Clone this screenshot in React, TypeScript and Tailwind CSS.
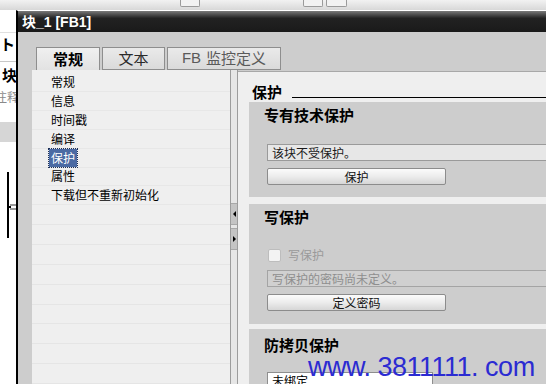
import React, { FC } from "react";

const cjk = "font-['Noto_Sans_CJK_SC','Liberation_Sans',sans-serif]";

const navItems = ["常规", "信息", "时间戳", "编译", "保护", "属性", "下载但不重新初始化"];

const Button: FC<{ label: string }> = ({ label }) => (
  <div className="ml-[3px] flex h-[17px] w-[179px] items-center justify-center rounded-[2px] border border-[#8c8c8c] bg-gradient-to-b from-[#fbfbfb] via-[#ececec] to-[#d6d6d6] text-[12px] leading-none text-[#111]">
    {label}
  </div>
);

const TextBox: FC<{ text: string; disabled?: boolean }> = ({ text, disabled }) => (
  <div
    className={`ml-[3px] flex h-[17px] items-center border pl-[4px] text-[12px] leading-none ${
      disabled
        ? "border-[#a4a4a4] bg-[#d0d0d0] text-[#8e8e8e]"
        : "border-[#9a9a9a] bg-[#e7e7e7] text-[#1a1a1a]"
    }`}
  >
    {text}
  </div>
);

const SectionTitle: FC<{ title: string; className: string }> = ({ title, className }) => (
  <div className={`text-[15px] font-bold text-black ${className}`}>{title}</div>
);

const App: FC = () => {
  const _renderBackdrop = () => {
    return (
      <div className="flex w-[16px] shrink-0 flex-col overflow-hidden bg-white">
        <div className="h-[23px] border-b border-[#e0e0e0]" />
        <div className="h-[29px] border-b border-[#c8c8c8] pt-[1px] text-[15px] font-bold leading-[20px] text-black">
          ト
        </div>
        <div className="h-[25px] pl-[2px] pt-[4px] text-[15px] font-bold leading-[18px] text-black">
          块
        </div>
        <div className="-ml-[5px] h-[35px] whitespace-nowrap pt-[2px] text-[12px] leading-[16px] text-[#8a8a8a]">
          注释
        </div>
        <div className="h-[20px] bg-[#d6d6d6]" />
        <div className="relative mt-[30px] h-[66px]">
          <div className="ml-[7px] h-[66px] w-[2px] bg-black" />
          <div className="absolute left-[10px] top-[32px] h-[2px] w-[6px] bg-[#9a9a9a]" />
          <div className="absolute left-[10px] top-[36px] h-[2px] w-[6px] bg-[#9a9a9a]" />
          <div className="absolute left-[7px] top-[34px] h-[2px] w-[4px] bg-black" />
        </div>
      </div>
    );
  };

  const _renderTabs = () => {
    return (
      <div className="ml-[4px] mt-[15px] flex h-[23px] items-stretch gap-[2px]">
        <div className="flex w-[64px] items-center justify-center border border-b-0 border-[#8e8e8e] bg-gradient-to-b from-[#f0f0f0] to-[#e2e2e2] text-[15px] font-bold text-black">
          常规
        </div>
        <div className="flex w-[63px] items-center justify-center border border-[#8e8e8e] bg-gradient-to-b from-[#eaeaea] to-[#dadada] text-[15px] text-[#2a2a2a]">
          文本
        </div>
        <div className="flex w-[114px] items-center justify-center border border-[#8e8e8e] bg-gradient-to-b from-[#eaeaea] to-[#dadada] text-[15px] text-[#5a5a5a]">
          <span className="font-['Liberation_Sans',sans-serif]">FB</span>
          <span className="ml-[5px]">监控定义</span>
        </div>
      </div>
    );
  };

  const _renderNav = () => {
    return (
      <div className="flex w-[198px] shrink-0 flex-col bg-[#efefef] pt-[3px]">
        {navItems.map((item) => (
          <div key={item} className="flex h-[19px] items-center border-b border-[#e7e7e7] pl-[17px]">
            {item === "保护" ? (
              <span className="flex h-[18px] items-center bg-[#4b6aa3] px-[2px] text-[12px] leading-none text-white outline-1 outline-dotted outline-[#1d2f55]">
                {item}
              </span>
            ) : (
              <span className="px-[2px] text-[12px] leading-none text-black">{item}</span>
            )}
          </div>
        ))}
        {Array.from({ length: 9 }).map((_, i) => (
          <div key={i} className="h-[20px] border-b border-[#e5e5e5]" />
        ))}
      </div>
    );
  };

  const _renderSplitter = () => {
    return (
      <div className="flex w-[8px] shrink-0 flex-col border-l border-r border-[#9c9c9c] bg-[#e6e6e6] pt-[133px]">
        <div className="flex h-[22px] items-center justify-center border-y border-[#a8a8a8] bg-[#c4c4c4]">
          <div className="h-0 w-0 border-y-[3px] border-r-[3px] border-y-transparent border-r-black" />
        </div>
        <div className="mt-[3px] flex h-[22px] items-center justify-center border-y border-[#a8a8a8] bg-[#c4c4c4]">
          <div className="h-0 w-0 border-y-[3px] border-l-[3px] border-y-transparent border-l-black" />
        </div>
      </div>
    );
  };

  const _renderDetail = () => {
    return (
      <div className="-mr-[30px] mt-[1px] flex min-w-0 flex-1 flex-col border-t border-[#a8a8a8] bg-[#efefef] pl-[11px]">
        <div className="flex h-[36px] items-start pl-[3px] pt-[10px]">
          <span className="text-[15px] font-bold leading-[20px] text-black">保护</span>
          <div className="ml-[10px] mt-[15px] h-px flex-1 bg-black" />
        </div>

        <div className="flex flex-col bg-[#cdcdcd] pb-[12px] pl-[15px]">
          <SectionTitle title="专有技术保护" className="h-[26px] leading-[26px]" />
          <div className="mt-[16px]">
            <TextBox text="该块不受保护。" />
          </div>
          <div className="mt-[7px]">
            <Button label="保护" />
          </div>
        </div>

        <div className="mt-[7px] flex flex-col bg-[#cdcdcd] pb-[13px] pl-[15px]">
          <SectionTitle title="写保护" className="h-[25px] leading-[25px]" />
          <div className="ml-[4px] mt-[19px] flex h-[14px] items-center">
            <div className="h-[13px] w-[13px] rounded-[2px] border border-[#bdbdbd] bg-[#f3f3f3]" />
            <span className="ml-[7px] text-[12px] leading-none text-[#9a9a9a]">写保护</span>
          </div>
          <div className="mt-[8px]">
            <TextBox text="写保护的密码尚未定义。" disabled />
          </div>
          <div className="mt-[7px]">
            <Button label="定义密码" />
          </div>
        </div>

        <div className="mt-[5px] flex flex-1 flex-col bg-[#cdcdcd] pl-[15px]">
          <SectionTitle title="防拷贝保护" className="h-[32px] leading-[32px]" />
          <div className="ml-[3px] mt-[11px] flex h-[17px] w-[166px] items-center border border-[#8e8e8e] bg-white pl-[4px] text-[12px] leading-none text-black">
            未绑定
          </div>
        </div>
      </div>
    );
  };

  return (
    <div className={`relative flex h-[384px] w-[546px] flex-col overflow-hidden bg-[#e2e2e2] ${cjk}`}>
      {/* toolbar of the app behind the dialog */}
      <div className="flex h-[10px] shrink-0 items-start bg-gradient-to-b from-[#f2f2f2] to-[#d8d8d8]">
        <div className="ml-[180px] h-[7px] w-[20px] rounded-b-[2px] border border-t-0 border-[#9a9a9a] bg-[#f2f2f2]" />
        <div className="ml-[103px] h-[7px] w-[20px] rounded-b-[2px] border border-t-0 border-[#9a9a9a] bg-[#f2f2f2]" />
        <div className="ml-[3px] h-[7px] w-[21px] rounded-b-[2px] border border-t-0 border-[#9a9a9a] bg-[#f2f2f2]" />
      </div>

      <div className="flex min-h-0 flex-1">
        {_renderBackdrop()}

        {/* dialog window */}
        <div className="flex min-w-0 flex-1 flex-col overflow-hidden border-l-2 border-t border-l-black border-t-white">
          <div className="flex h-[21px] shrink-0 items-center bg-gradient-to-b from-[#7a7a7a] via-[#222] via-35% to-[#1a1a1a] pl-[4px]">
            <span className="text-[14px] font-bold leading-none text-white">
              块<span className="font-['Liberation_Sans',sans-serif]">_1 [FB1]</span>
            </span>
          </div>

          <div className="flex min-h-0 flex-1 flex-col bg-[#cdcdcd] pl-[14px]">
            {_renderTabs()}
            <div className="flex min-h-0 flex-1">
              {_renderNav()}
              {_renderSplitter()}
              {_renderDetail()}
            </div>
          </div>
        </div>
      </div>

      {/* watermark over the page */}
      <div className="absolute left-[308px] top-[354px] whitespace-nowrap font-['Liberation_Sans',sans-serif] text-[27px] leading-none tracking-[-0.5px] text-[#2b2bd2]">
        www. 3811111. com
      </div>
    </div>
  );
};

export default App;
